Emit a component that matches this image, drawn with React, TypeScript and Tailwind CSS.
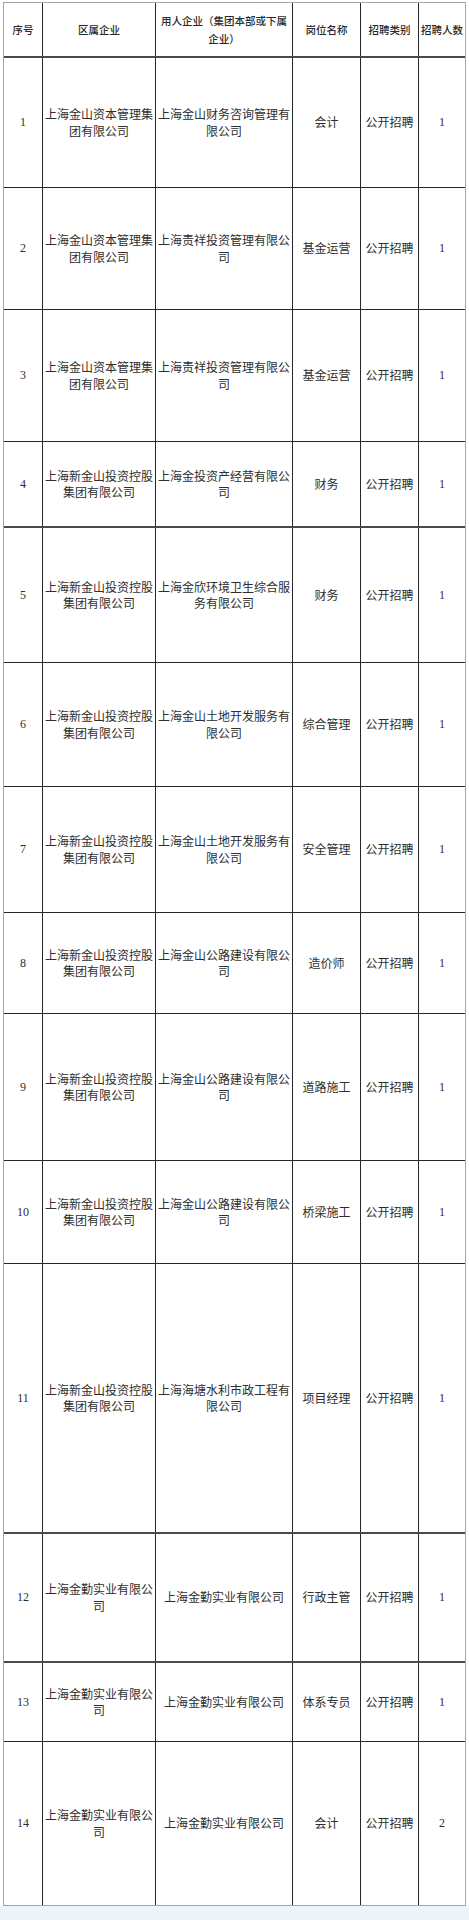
import React from "react";

type Row = {
  n: string;
  a: string;
  b: string;
  c: string;
  d: string;
  e: string;
  cls: string;
};

const rows: Row[] = [
  { n: "1", a: "上海金山资本管理集团有限公司", b: "上海金山财务咨询管理有限公司", c: "会计", d: "公开招聘", e: "1", cls: "h-[131px] border-t-2 border-[#4a4a4a]" },
  { n: "2", a: "上海金山资本管理集团有限公司", b: "上海责祥投资管理有限公司", c: "基金运营", d: "公开招聘", e: "1", cls: "h-[122px] border-t border-[#262626]" },
  { n: "3", a: "上海金山资本管理集团有限公司", b: "上海责祥投资管理有限公司", c: "基金运营", d: "公开招聘", e: "1", cls: "h-[132px] border-t border-[#262626]" },
  { n: "4", a: "上海新金山投资控股集团有限公司", b: "上海金投资产经营有限公司", c: "财务", d: "公开招聘", e: "1", cls: "h-[85px] border-t border-[#262626]" },
  { n: "5", a: "上海新金山投资控股集团有限公司", b: "上海金欣环境卫生综合服务有限公司", c: "财务", d: "公开招聘", e: "1", cls: "h-[136px] border-t-2 border-[#4a4a4a]" },
  { n: "6", a: "上海新金山投资控股集团有限公司", b: "上海金山土地开发服务有限公司", c: "综合管理", d: "公开招聘", e: "1", cls: "h-[124px] border-t border-[#262626]" },
  { n: "7", a: "上海新金山投资控股集团有限公司", b: "上海金山土地开发服务有限公司", c: "安全管理", d: "公开招聘", e: "1", cls: "h-[126px] border-t border-[#262626]" },
  { n: "8", a: "上海新金山投资控股集团有限公司", b: "上海金山公路建设有限公司", c: "造价师", d: "公开招聘", e: "1", cls: "h-[101px] border-t border-[#262626]" },
  { n: "9", a: "上海新金山投资控股集团有限公司", b: "上海金山公路建设有限公司", c: "道路施工", d: "公开招聘", e: "1", cls: "h-[147px] border-t border-[#262626]" },
  { n: "10", a: "上海新金山投资控股集团有限公司", b: "上海金山公路建设有限公司", c: "桥梁施工", d: "公开招聘", e: "1", cls: "h-[103px] border-t border-[#262626]" },
  { n: "11", a: "上海新金山投资控股集团有限公司", b: "上海海塘水利市政工程有限公司", c: "项目经理", d: "公开招聘", e: "1", cls: "h-[269px] border-t border-[#262626]" },
  { n: "12", a: "上海金勤实业有限公司", b: "上海金勤实业有限公司", c: "行政主管", d: "公开招聘", e: "1", cls: "h-[129px] border-t-2 border-[#4a4a4a]" },
  { n: "13", a: "上海金勤实业有限公司", b: "上海金勤实业有限公司", c: "体系专员", d: "公开招聘", e: "1", cls: "h-[80px] border-t-2 border-[#4a4a4a]" },
  { n: "14", a: "上海金勤实业有限公司", b: "上海金勤实业有限公司", c: "会计", d: "公开招聘", e: "2", cls: "h-[164px] border-t border-[#262626]" },
];

const grid = "grid grid-cols-[38px_113px_137px_68px_58px_47px]";
const cell =
  "flex items-center justify-center text-center border-l border-[#262626] px-[2px]";

export default function App() {
  return (
    <div className="w-[469px] bg-white font-['Noto_Sans_CJK_SC',sans-serif] text-[#2e2e2e]">
      <div className="pt-[2px] pl-[3px]">
        <div className="w-[463px] border border-[#a6a6a6] bg-white">
          {/* header */}
          <div className={`${grid} h-[53px] text-[10.5px] leading-[17.5px] font-medium text-[#2a2a2a]`}>
            <div className="flex items-center justify-center text-center">序号</div>
            <div className={cell}>区属企业</div>
            <div className="flex items-center justify-center text-center border-l border-[#262626] px-[3px]">
              用人企业（集团本部或下属企业）
            </div>
            <div className={cell}>岗位名称</div>
            <div className={cell}>招聘类别</div>
            <div className="flex items-center justify-center text-center border-l border-[#262626] px-0">招聘人数</div>
          </div>
          {rows.map((r) => (
            <div key={r.n} className={`${grid} ${r.cls} text-[12px] leading-[16.5px]`}>
              <div className="flex items-center justify-center text-center font-['Liberation_Serif',serif] text-[12px]">
                {r.n}
              </div>
              <div className={cell}>{r.a}</div>
              <div className={cell}>{r.b}</div>
              <div className={cell}>{r.c}</div>
              <div className={cell}>{r.d}</div>
              <div className={`${cell} font-['Liberation_Serif',serif]`}>{r.e}</div>
            </div>
          ))}
        </div>
      </div>
      <div className="h-[14px] bg-[#eef4fb]" />
    </div>
  );
}
